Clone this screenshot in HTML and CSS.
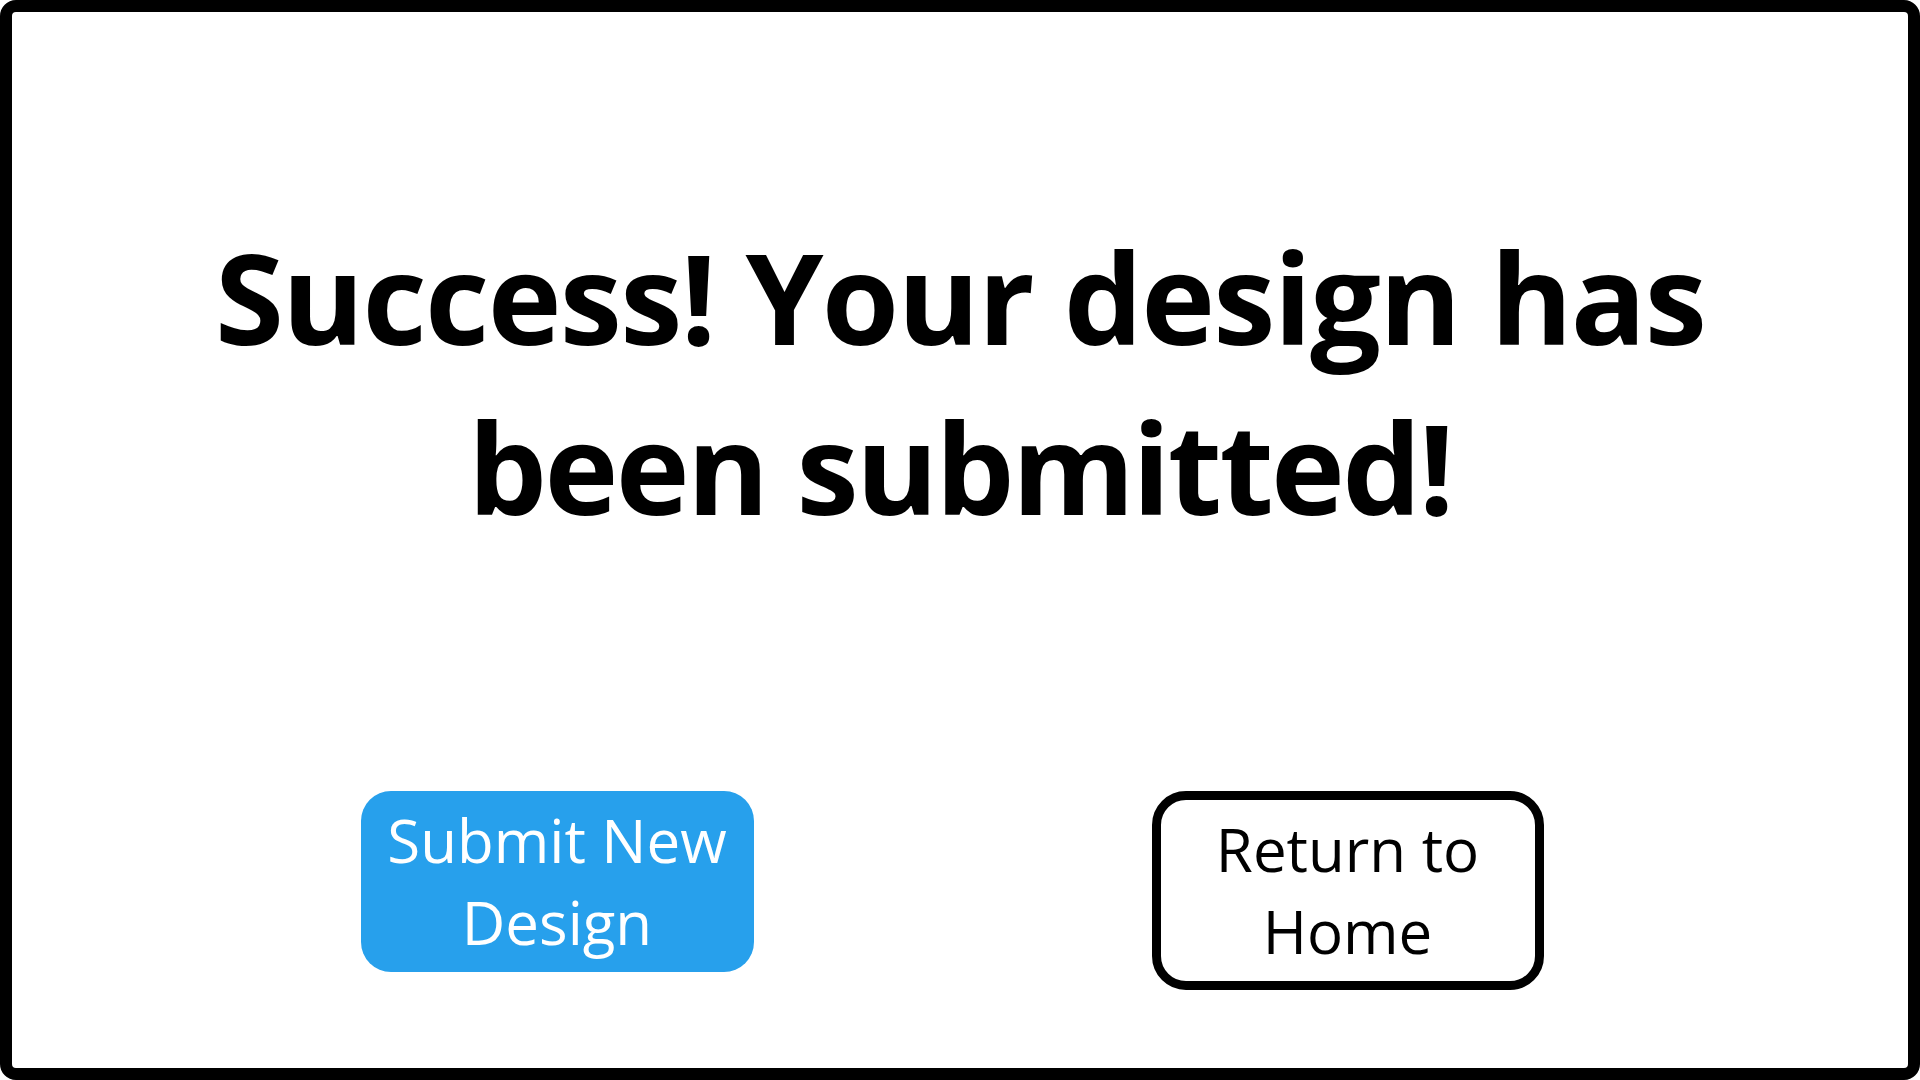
FILE: index.html
```html
<!DOCTYPE html>
<html lang="en">
<head>
<meta charset="utf-8">
<title>Design submitted</title>
<link rel="stylesheet" href="styles.css">
</head>
<body>
<main class="frame">
  <h1 class="title"><span class="line line-1">Success! Your design has</span><span class="line line-2">been submitted!</span></h1>
  <div class="actions">
    <a class="btn btn-primary" href="#">Submit New<br>Design</a>
    <a class="btn btn-outline" href="#">Return to<br>Home</a>
  </div>
</main>
</body>
</html>
```
FILE: styles.css
```css
html, body {
  margin: 0;
  padding: 0;
  background: #ffffff;
}

.frame {
  box-sizing: border-box;
  width: 1920px;
  height: 1080px;
  border: 12px solid #000000;
  border-radius: 16px;
  display: flex;
  flex-direction: column;
  align-items: center;
  font-family: "Open Sans", "Noto Sans", sans-serif;
  color: #000000;
}

.title {
  margin: 200px 0 0 0;
  font-size: 125px;
  font-weight: 700;
  line-height: 170px;
  text-align: center;
  white-space: nowrap;
}

.line {
  display: block;
}

.line-1 {
  letter-spacing: -1.7px;
}

.line-2 {
  letter-spacing: -2.6px;
}

.actions {
  margin-top: 239px;
  display: flex;
  align-items: flex-start;
  justify-content: center;
  gap: 398px;
  padding-right: 16px;
}

.btn {
  box-sizing: border-box;
  display: block;
  text-align: center;
  text-decoration: none;
  font-size: 60px;
  font-weight: 400;
  line-height: 82px;
  padding: 8px 0 9px 0;
}

.btn-primary {
  width: 393px;
  height: 181px;
  background: #27a0ec;
  color: #ffffff;
  border-radius: 30px;
}

.btn-outline {
  width: 392px;
  height: 199px;
  border: 9px solid #000000;
  border-radius: 34px;
  color: #000000;
  background: #ffffff;
}
```
